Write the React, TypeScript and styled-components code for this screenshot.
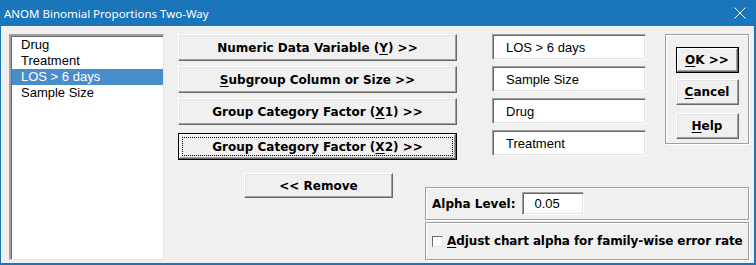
import React from "react";
import styled, { createGlobalStyle, css } from "styled-components";

const GlobalStyle = createGlobalStyle`
  html, body {
    margin: 0;
    padding: 0;
    background: #f0f0f0;
  }
  * {
    box-sizing: border-box;
  }
`;

const regular = `"Liberation Sans", Arial, sans-serif`;
const bold = `"DejaVu Sans", Verdana, sans-serif`;

const Window = styled.div`
  width: 756px;
  height: 265px;
  background: #f0f0f0;
  border-left: 1px solid #1a75bb;
  border-right: 2px solid #1a75bb;
  border-bottom: 2px solid #1a75bb;
  display: flex;
  flex-direction: column;
  overflow: hidden;
`;

const TitleBar = styled.div`
  height: 26px;
  flex: none;
  background: #1a75bb;
  display: flex;
  align-items: center;
  justify-content: space-between;
  padding: 0 10px 0 3px;
  margin-left: -1px;
  margin-right: -2px;
`;

const TitleText = styled.span`
  font-family: "Noto Sans", "Liberation Sans", sans-serif;
  font-size: 11.5px;
  color: #ffffff;
  padding-left: 1px;
`;

const Body = styled.div`
  display: flex;
  align-items: flex-start;
  padding: 8px 0 0 8px;
`;

const ListBox = styled.div`
  width: 155px;
  height: 226px;
  background: #ffffff;
  border-top: 2px solid #a0a0a0;
  border-left: 2px solid #a0a0a0;
  border-right: 1px solid #e3e3e3;
  border-bottom: 1px solid #e3e3e3;
  box-shadow: inset 1px 1px 0 #696969;
  padding-top: 1px;
  padding-left: 1px;
`;

const ListItem = styled.div<{ $selected?: boolean }>`
  height: 16px;
  line-height: 16px;
  padding-left: 9px;
  font-family: ${regular};
  font-size: 13px;
  color: ${({ $selected }) => ($selected ? "#ffffff" : "#000000")};
  background: ${({ $selected }) => ($selected ? "#4a8dcb" : "transparent")};
  white-space: nowrap;
`;

const Right = styled.div`
  display: flex;
  flex-direction: column;
  margin-left: 14px;
`;

const TopRow = styled.div`
  display: flex;
  align-items: flex-start;
`;

const ButtonColumn = styled.div`
  width: 279px;
  display: flex;
  flex-direction: column;
`;

const raised = css`
  background: #f0f0f0;
  border-top: 1px solid #ffffff;
  border-left: 1px solid #ffffff;
  border-right: 1px solid #696969;
  border-bottom: 1px solid #696969;
  box-shadow: inset -1px -1px 0 #a0a0a0, inset 1px 1px 0 #e3e3e3;
`;

const defaultBorder = css`
  border: 1px solid #000000;
  box-shadow: inset -1px -1px 0 #696969, inset 1px 1px 0 #ffffff,
    inset -2px -2px 0 #a0a0a0;
`;

const PushButton = styled.div<{
  $w?: number;
  $h?: number;
  $mt?: number;
  $ml?: number;
  $default?: boolean;
}>`
  ${raised};
  ${({ $default }) => ($default ? defaultBorder : "")};
  position: relative;
  flex: none;
  width: ${({ $w }) => ($w ? `${$w}px` : "100%")};
  height: ${({ $h }) => $h ?? 27}px;
  margin-top: ${({ $mt }) => $mt ?? 0}px;
  margin-left: ${({ $ml }) => $ml ?? 0}px;
  display: flex;
  align-items: center;
  justify-content: center;
  font-family: ${bold};
  font-weight: bold;
  font-size: 12px;
  color: #000000;
  white-space: nowrap;
  u {
    text-decoration: underline;
    text-underline-offset: 2px;
  }
`;

const FocusRect = styled.div`
  position: absolute;
  inset: 3px;
  border: 1px dotted #000000;
  pointer-events: none;
`;

const FieldColumn = styled.div`
  width: 154px;
  margin-left: 35px;
  display: flex;
  flex-direction: column;
  gap: 6px;
`;

const sunken = css`
  background: #ffffff;
  border-top: 1px solid #a0a0a0;
  border-left: 1px solid #a0a0a0;
  border-right: 1px solid #ffffff;
  border-bottom: 1px solid #ffffff;
  box-shadow: inset 1px 1px 0 #696969, inset -1px -1px 0 #e3e3e3;
`;

const Field = styled.div<{ $w?: number; $h?: number; $pl?: number }>`
  ${sunken};
  flex: none;
  width: ${({ $w }) => ($w ? `${$w}px` : "100%")};
  height: ${({ $h }) => $h ?? 26}px;
  display: flex;
  align-items: center;
  padding-left: ${({ $pl }) => $pl ?? 13}px;
  font-family: ${regular};
  font-weight: normal;
  font-size: 13px;
  letter-spacing: 0;
  color: #000000;
  white-space: nowrap;
`;

const groupBox = css`
  border: 1px solid #a0a0a0;
  box-shadow: inset 1px 1px 0 #ffffff, 1px 1px 0 #ffffff;
`;

const OkGroup = styled.div`
  ${groupBox};
  width: 84px;
  height: 110px;
  margin-left: 19px;
  display: flex;
  flex-direction: column;
  align-items: center;
  padding-top: 12px;
  gap: 6px;
`;

const BottomRow = styled.div`
  display: flex;
  align-items: flex-start;
  padding-top: 13px;
`;

const AlphaStack = styled.div`
  width: 324px;
  margin-left: 32px;
  margin-top: 14px;
  display: flex;
  flex-direction: column;
  gap: 2px;
`;

const AlphaBox = styled.div<{ $h: number }>`
  ${groupBox};
  height: ${({ $h }) => $h}px;
  display: flex;
  align-items: center;
  padding-left: 6px;
  font-family: ${bold};
  font-weight: bold;
  font-size: 12px;
  color: #000000;
  white-space: nowrap;
  u {
    text-decoration: underline;
    text-underline-offset: 2px;
  }
`;

const Label = styled.span`
  margin-right: 7px;
`;

const CheckLabel = styled.span`
  letter-spacing: -0.1px;
`;

const CheckBox = styled.span`
  width: 11px;
  height: 11px;
  background: #ffffff;
  border-top: 1px solid #696969;
  border-left: 1px solid #696969;
  border-right: 1px solid #e3e3e3;
  border-bottom: 1px solid #e3e3e3;
  margin-right: 4px;
  flex: none;
`;

const CloseIcon = () => (
  <svg width="12" height="12" viewBox="0 0 12 12">
    <path d="M0.5 0.5 L11.5 11.5 M11.5 0.5 L0.5 11.5" stroke="#ffffff" strokeWidth="1" />
  </svg>
);

const variables = ["Drug", "Treatment", "LOS > 6 days", "Sample Size"];

export default function App() {
  return (
    <>
      <GlobalStyle />
      <Window>
        <TitleBar>
          <TitleText>ANOM Binomial Proportions Two-Way</TitleText>
          <CloseIcon />
        </TitleBar>
        <Body>
          <ListBox>
            {variables.map((v) => (
              <ListItem key={v} $selected={v === "LOS > 6 days"}>
                {v}
              </ListItem>
            ))}
          </ListBox>
          <Right>
            <TopRow>
              <ButtonColumn>
                <PushButton>
                  Numeric Data Variable (<u>Y</u>) &gt;&gt;
                </PushButton>
                <PushButton $mt={5}>
                  <u>S</u>ubgroup Column or Size &gt;&gt;
                </PushButton>
                <PushButton $mt={5}>
                  Group Category Factor (<u>X</u>1) &gt;&gt;
                </PushButton>
                <PushButton $mt={8} $default>
                  Group Category Factor (<u>X</u>2) &gt;&gt;
                  <FocusRect />
                </PushButton>
              </ButtonColumn>
              <FieldColumn>
                <Field>LOS &gt; 6 days</Field>
                <Field>Sample Size</Field>
                <Field>Drug</Field>
                <Field>Treatment</Field>
              </FieldColumn>
              <OkGroup>
                <PushButton $w={63} $h={26} $default>
                  <u>O</u>K &gt;&gt;
                </PushButton>
                <PushButton $w={63} $h={26}>
                  <u>C</u>ancel
                </PushButton>
                <PushButton $w={63} $h={26} $mt={2}>
                  <u>H</u>elp
                </PushButton>
              </OkGroup>
            </TopRow>
            <BottomRow>
              <PushButton $w={149} $h={25} $ml={66}>
                &lt;&lt; Remove
              </PushButton>
              <AlphaStack>
                <AlphaBox $h={33}>
                  <Label>Alpha Level:</Label>
                  <Field $w={62} $h={23} $pl={11}>
                    0.05
                  </Field>
                </AlphaBox>
                <AlphaBox $h={38}>
                  <CheckBox />
                  <CheckLabel>
                    <u>A</u>djust chart alpha for family-wise error rate
                  </CheckLabel>
                </AlphaBox>
              </AlphaStack>
            </BottomRow>
          </Right>
        </Body>
      </Window>
    </>
  );
}
